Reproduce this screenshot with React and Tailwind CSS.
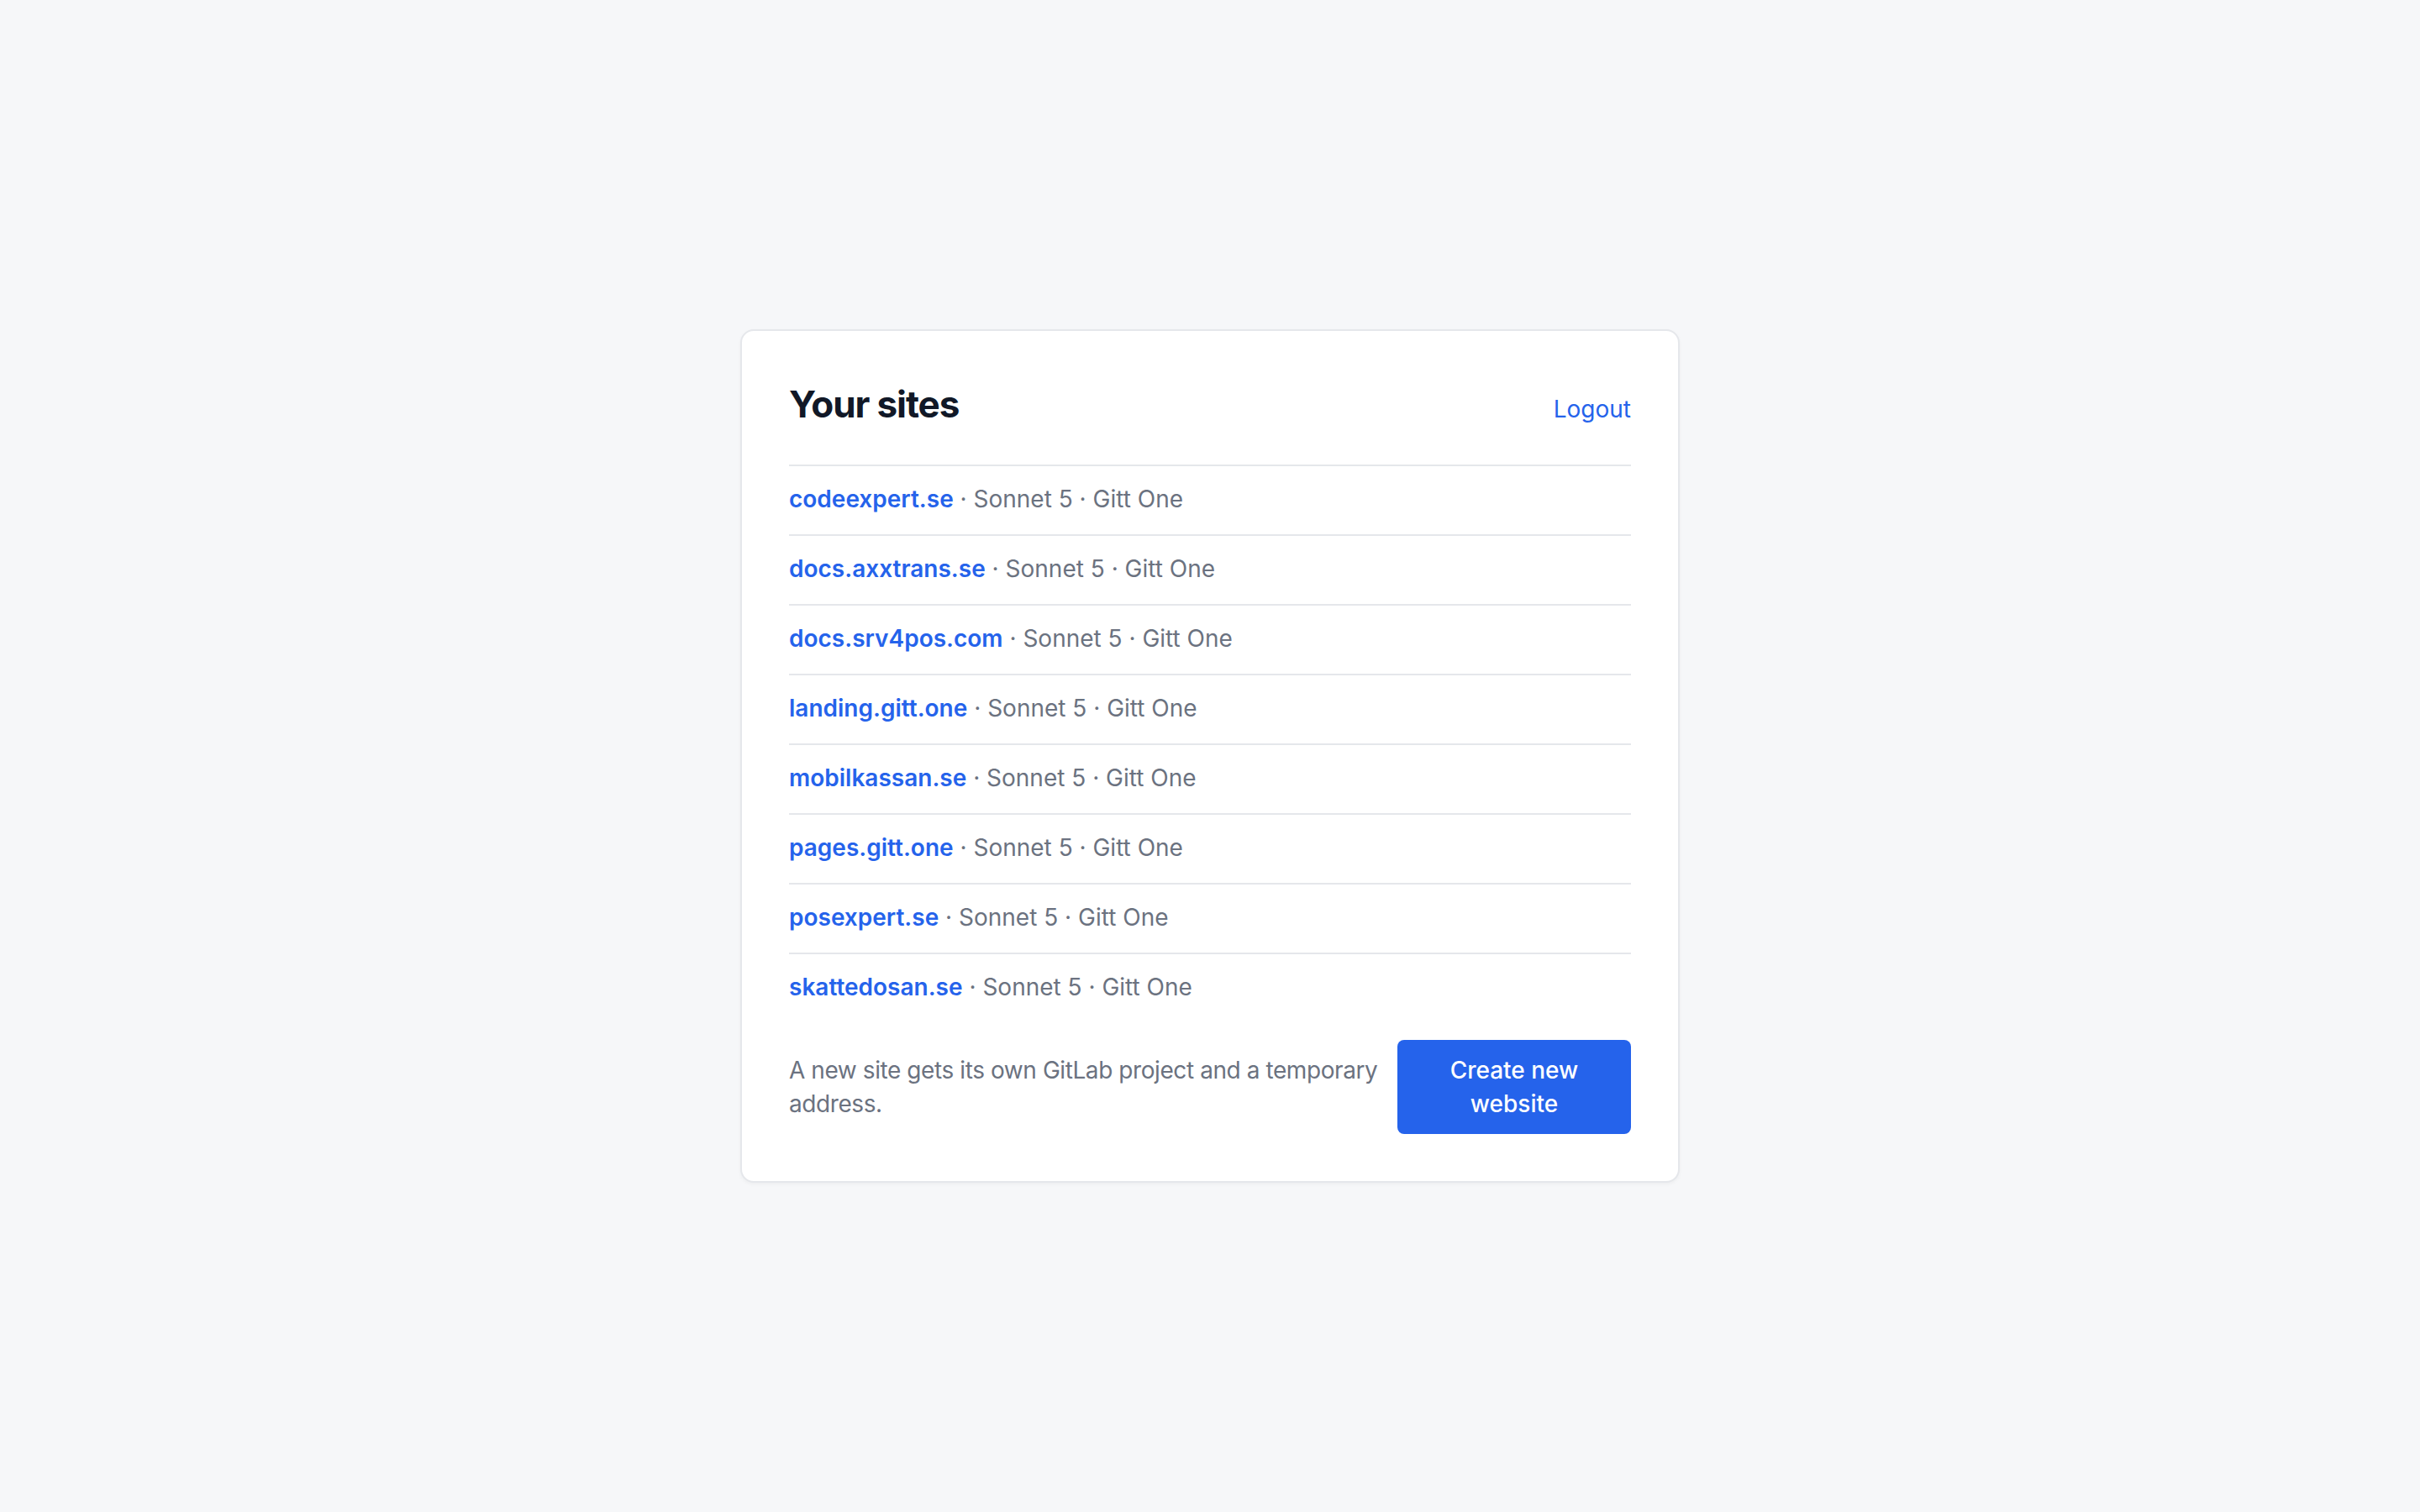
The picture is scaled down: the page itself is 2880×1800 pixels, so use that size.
import React from "react";

const sites = [
  "codeexpert.se",
  "docs.axxtrans.se",
  "docs.srv4pos.com",
  "landing.gitt.one",
  "mobilkassan.se",
  "pages.gitt.one",
  "posexpert.se",
  "skattedosan.se",
];

export default function App() {
  return (
    <div
      className="min-h-screen bg-[#f6f7f9] flex items-center justify-center"
      style={{ fontFamily: "Inter, 'Noto Sans', sans-serif" }}
    >
      <div className="w-[1118px] bg-white border-2 border-[#e5e7eb] rounded-2xl shadow-[0_2px_4px_rgba(0,0,0,0.04)] px-14 pt-[58px] pb-14">
        <div className="flex items-baseline justify-between pb-[43px] border-b-2 border-[#e5e7eb]">
          <h1 className="text-[44px] leading-[58.6px] font-bold tracking-tight text-[#111827]">
            Your sites
          </h1>
          <a href="#" className="text-[28px] leading-10 text-[#2563eb]">
            Logout
          </a>
        </div>
        <ul>
          {sites.map((s, i) => (
            <li
              key={s}
              className={
                "pt-[15px] pb-[17px] text-[28px] leading-[49px] " +
                (i < sites.length - 1 ? "border-b-2 border-[#e5e7eb]" : "")
              }
            >
              <a href="#" className="font-semibold text-[#2563eb]">
                {s}
              </a>
              <span className="text-[#6b7280]"> · Sonnet 5 · Gitt One</span>
            </li>
          ))}
        </ul>
        <div className="mt-[21px] flex items-center gap-4">
          <p className="flex-1 min-w-0 text-[28px] leading-10 tracking-[-0.015em] text-[#6b7280]">
            A new site gets its own GitLab project and a temporary address.
          </p>
          <button className="shrink-0 w-[278px] py-4 px-8 rounded-lg bg-[#2563eb] text-white text-[28px] leading-10 font-medium">
            Create new website
          </button>
        </div>
      </div>
    </div>
  );
}
